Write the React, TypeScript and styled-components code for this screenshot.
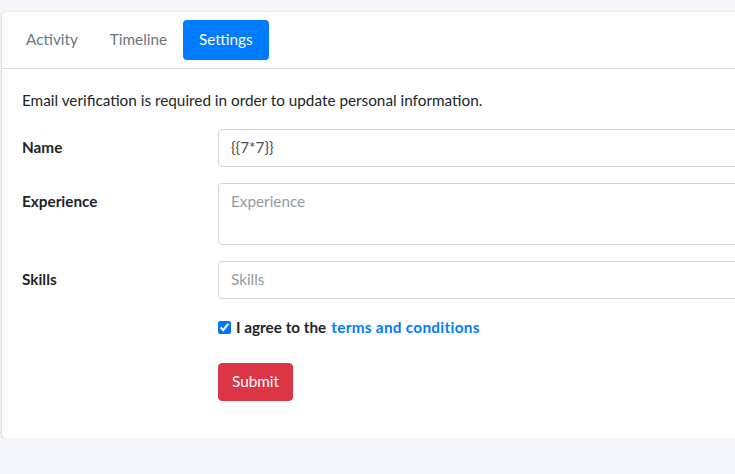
import React from "react";
import styled, { createGlobalStyle } from "styled-components";

const Global = createGlobalStyle`
  html, body { margin: 0; padding: 0; }
  body {
    background: #f4f6f9;
    font-family: Lato, "Noto Sans", sans-serif;
    font-size: 15.3px;
    line-height: 24px;
    color: #212529;
    overflow: hidden;
  }
  * { box-sizing: border-box; }
`;

const Page = styled.div`
  padding: 12px 0 0 2px;
`;

const Card = styled.div`
  width: 1200px;
  background: #fff;
  border-radius: 4px;
  box-shadow: 0 0 1px rgba(0, 0, 0, 0.125), 0 1px 3px rgba(0, 0, 0, 0.2);
`;

const CardHeader = styled.div`
  padding: 8px;
  border-bottom: 1px solid rgba(0, 0, 0, 0.125);
`;

const Nav = styled.ul`
  display: flex;
  list-style: none;
  margin: 0;
  padding: 0;
`;

const NavLink = styled.a<{ $active?: boolean }>`
  display: block;
  padding: 7px 16px 9px;
  border-radius: 4px;
  text-decoration: none;
  color: ${(p) => (p.$active ? "#fff" : "#6c757d")};
  background: ${(p) => (p.$active ? "#007bff" : "transparent")};
  cursor: pointer;
`;

const CardBody = styled.div`
  padding: 19px 20px 21px;
`;

const Intro = styled.p`
  margin: 0 0 17px 0;
`;

const Row = styled.div`
  display: grid;
  grid-template-columns: 196px 1fr;
  margin-bottom: 16px;
`;

const Label = styled.label`
  font-weight: 700;
  padding-top: 6px;
  padding-bottom: 8px;
`;

const Input = styled.input`
  display: block;
  width: 100%;
  height: 38px;
  padding: 5px 12px 7px;
  font: inherit;
  color: #495057;
  background: #fff;
  border: 1px solid #ced4da;
  border-radius: 4px;
  outline: none;
  &::placeholder { color: #939ba2; }
`;

const TextArea = styled.textarea`
  display: block;
  width: 100%;
  height: 62px;
  padding: 5px 12px 7px;
  font: inherit;
  color: #495057;
  background: #fff;
  border: 1px solid #ced4da;
  border-radius: 4px;
  outline: none;
  resize: none;
  &::placeholder { color: #939ba2; }
`;

const Field = styled.div`
  grid-column: 2;
`;

const CheckLabel = styled.label`
  display: inline-flex;
  align-items: center;
  font-weight: 700;
  margin-bottom: 8px;
`;

const Check = styled.input`
  width: 13px;
  height: 13px;
  margin: 1px 5px 0 0;
`;

const Link = styled.a`
  color: #007bff;
  text-decoration: none;
  margin-left: 5px;
  letter-spacing: 0.3px;
`;

const Button = styled.button`
  font: inherit;
  color: #fff;
  background: #dc3545;
  border: 1px solid #dc3545;
  border-radius: 4px;
  padding: 5px 13px 7px;
  line-height: 24px;
  cursor: pointer;
`;

export default function App() {
  return (
    <>
      <Global />
      <Page>
        <Card>
          <CardHeader>
            <Nav>
              <li><NavLink>Activity</NavLink></li>
              <li><NavLink>Timeline</NavLink></li>
              <li><NavLink $active>Settings</NavLink></li>
            </Nav>
          </CardHeader>
          <CardBody>
            <Intro>Email verification is required in order to update personal information.</Intro>
            <Row>
              <Label>Name</Label>
              <Input defaultValue="{{7*7}}" />
            </Row>
            <Row>
              <Label>Experience</Label>
              <TextArea placeholder="Experience" />
            </Row>
            <Row>
              <Label>Skills</Label>
              <Input placeholder="Skills" />
            </Row>
            <Row>
              <Field>
                <CheckLabel>
                  <Check type="checkbox" defaultChecked />
                  I agree to the<Link>terms and conditions</Link>
                </CheckLabel>
              </Field>
            </Row>
            <Row>
              <Field>
                <Button>Submit</Button>
              </Field>
            </Row>
          </CardBody>
        </Card>
      </Page>
    </>
  );
}
